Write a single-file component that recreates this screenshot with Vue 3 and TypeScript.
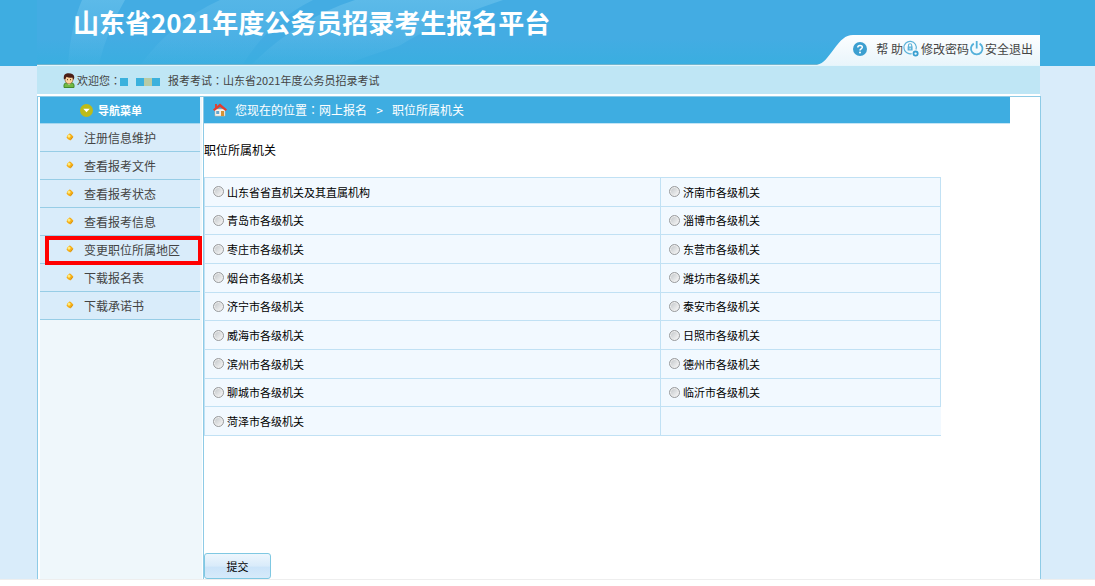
<script setup lang="ts">
import { ref } from 'vue'

interface MenuItem {
  label: string
  active?: boolean
}

const menu: MenuItem[] = [
  { label: '注册信息维护' },
  { label: '查看报考文件' },
  { label: '查看报考状态' },
  { label: '查看报考信息' },
  { label: '变更职位所属地区', active: true },
  { label: '下载报名表' },
  { label: '下载承诺书' },
]

const rows: string[][] = [
  ['山东省省直机关及其直属机构', '济南市各级机关'],
  ['青岛市各级机关', '淄博市各级机关'],
  ['枣庄市各级机关', '东营市各级机关'],
  ['烟台市各级机关', '潍坊市各级机关'],
  ['济宁市各级机关', '泰安市各级机关'],
  ['威海市各级机关', '日照市各级机关'],
  ['滨州市各级机关', '德州市各级机关'],
  ['聊城市各级机关', '临沂市各级机关'],
  ['菏泽市各级机关', ''],
]

const selected = ref<string>('')
</script>

<template>
  <div class="page">
    <header class="banner">
      <div class="banner-inner">
        <svg class="rays" viewBox="0 0 1003 64" preserveAspectRatio="xMinYMin slice" aria-hidden="true">
          <defs>
            <linearGradient id="ray" x1="0" y1="0" x2="0" y2="1">
              <stop offset="0" stop-color="#7fcdf0" stop-opacity=".42" />
              <stop offset="1" stop-color="#7fcdf0" stop-opacity=".04" />
            </linearGradient>
          </defs>
          <path d="M45 0H88Q70 30 62 64H31Q34 25 45 0Z" fill="url(#ray)" />
          <path d="M183 0H276Q232 22 206 64H104Q135 22 183 0Z" fill="url(#ray)" opacity=".7" />
          <path d="M318 0H466Q400 22 362 46Q325 58 310 64H215Q262 18 318 0Z" fill="url(#ray)" />
        </svg>
        <h1>山东省2021年度公务员招录考生报名平台</h1>
        <nav class="tools">
          <svg class="curve" viewBox="0 0 36 30" aria-hidden="true">
            <defs>
              <linearGradient id="tab" x1="0" y1="0" x2="0" y2="1">
                <stop offset="0" stop-color="#fdfeff" />
                <stop offset="1" stop-color="#e9f5fb" />
              </linearGradient>
            </defs>
            <path d="M0 30C7 28 10 23 17 14C24 5 28 0 36 0V30Z" fill="url(#tab)" />
          </svg>
          <div class="tools-body">
            <a href="#" class="help">
              <svg width="14" height="14" viewBox="0 0 14 14" aria-hidden="true">
                <circle cx="7" cy="7" r="7" fill="#3c9fd0" />
                <path d="M4.8 5.4C4.8 2.8 9.3 2.8 9.3 5.3C9.3 6.8 7 6.8 7 8.4" fill="none" stroke="#fff" stroke-width="1.5" />
                <circle cx="7" cy="10.4" r="1" fill="#fff" />
              </svg>
              <span>帮 助</span>
            </a>
            <a href="#" class="password">
              <svg width="16" height="17" viewBox="0 0 16 17" fill="none" stroke="#5db3d9" aria-hidden="true">
                <path d="M8.6 13.6A6.2 6.2 0 1 1 13 9.5" stroke-width="1.2" />
                <rect x="4.6" y="6.5" width="5" height="4" fill="#5db3d9" stroke="none" />
                <path d="M5.5 7V5.3a1.6 1.6 0 0 1 3.2 0V7" stroke-width="1.1" />
                <path d="M7.1 7.7V9.4" stroke="#fff" />
                <circle cx="12.6" cy="13.6" r="2.1" stroke="#399fd0" stroke-width="1.8" />
              </svg>
              <span>修改密码</span>
            </a>
            <a href="#" class="logout">
              <svg width="16" height="15" viewBox="0 0 16 15" fill="none" stroke="#53b0da" stroke-width="1.8" aria-hidden="true">
                <path d="M4.8 2.6a5.8 5.8 0 1 0 5.8 0M7.7 0V7.5" />
              </svg>
              <span>安全退出</span>
            </a>
          </div>
        </nav>
      </div>
    </header>

    <div class="welcome">
      <svg width="12" height="15" viewBox="0 0 12 15" aria-hidden="true">
        <path d="M1 14.5V12q0-2 3-2.3h4q3 .3 3 2.3v2.5Z" fill="#72b944" stroke="#438c2d" />
        <path d="M4 9.5L6 12L8 9.5Z" fill="#fff" />
        <ellipse cx="6" cy="6.5" rx="4" ry="4.3" fill="#ffd39b" stroke="#80502b" stroke-width=".6" />
        <path d="M1 6.5Q-.2 1 4.5.3Q11 0 11.3 4.2L10.7 7L9.5 4.5Q6 5.3 3.5 3.8Q3.3 6 1 6.5Z" fill="#4b1f17" />
        <path d="M4.5 6.2v1M7.5 6.2v1" stroke="#50301f" />
      </svg>
      <span>欢迎您<span class="colon">：</span></span>
      <span class="mask"><i></i><i></i><i></i><i></i></span>
      <span>报考考试<span class="colon">：</span>山东省2021年度公务员招录考试</span>
    </div>

    <div class="body">
      <aside>
        <h2>
          <svg width="13" height="13" viewBox="0 0 13 13" aria-hidden="true">
            <circle cx="6.5" cy="6.5" r="6.5" fill="#bdbb19" />
            <path d="M3.3 4.8H9.7L6.5 8.3Z" fill="#fff" />
          </svg>
          <span>导航菜单</span>
        </h2>
        <ul>
          <li v-for="item in menu" :key="item.label" :class="{ active: item.active }">
            <a href="#">
              <svg width="8" height="8" viewBox="0 0 8 8" aria-hidden="true">
                <path d="M3.8 .3L7.4 3.7L4.2 7.5L.4 4.2Z" fill="#f0a30c" />
                <circle cx="3.8" cy="4" r="2.7" fill="#f5ae16" />
                <circle cx="3" cy="3.1" r="1.6" fill="#ffea7c" />
                <path d="M4.2 7.5L7.4 3.7L5.6 5Z" fill="#b87912" />
              </svg>
              <span>{{ item.label }}</span>
            </a>
          </li>
        </ul>
      </aside>

      <main>
        <div class="crumb">
          <svg width="14" height="14" viewBox="0 0 14 14" aria-hidden="true">
            <path d="M2 6H12V13H2Z" fill="#f8f4ed" stroke="#c9b9a7" stroke-width=".6" />
            <path d="M2 1h2v4h-2Z" fill="#d8473a" />
            <path d="M7 .5L14 6.5L12.7 8L7 4L1.3 8L0 6.5Z" fill="#e33d2f" />
            <path d="M8 8h3v5H8Z" fill="#d79337" />
            <path d="M3.2 8h3v3h-3Z" fill="#65a5cd" />
          </svg>
          <span>您现在的位置<span class="colon">：</span>网上报名</span>
          <span class="sep">&gt;</span>
          <span>职位所属机关</span>
        </div>
        <form @submit.prevent>
          <h3>职位所属机关</h3>
          <table>
            <tbody>
              <tr v-for="(row, r) in rows" :key="r">
                <td v-for="(name, c) in row" :key="c" :class="{ blank: !name }">
                  <label v-if="name">
                    <input v-model="selected" type="radio" name="organ" :value="name" />
                    <span>{{ name }}</span>
                  </label>
                </td>
              </tr>
            </tbody>
          </table>
          <button type="submit">提交</button>
        </form>
      </main>
    </div>
  </div>
</template>

<style>
body {
  background: #fff;
}
</style>

<style scoped>
.page {
  font-family: "Noto Sans CJK SC", sans-serif;
  font-size: 12px;
  line-height: 16px;
  color: #444;
  background: linear-gradient(#3eade1 66px, #d9ecfa 66px);
  padding: 0 54px 0 37px;
  border-bottom: 1px solid #eee;
}
a {
  color: #444;
  text-decoration: none;
}
svg {
  flex: none;
}
h1, h2, h3, ul {
  margin: 0;
  padding: 0;
  font-size: 12px;
  list-style: none;
}
.colon {
  font-family: "Noto Sans CJK TC", sans-serif;
}
.banner {
  margin-right: 1px;
  border-bottom: 1px solid #e4f5fb;
}
.banner-inner {
  position: relative;
  display: flex;
  justify-content: space-between;
  height: 64px;
  background: linear-gradient(#43ace3 60%, #3aaee0);
  border-bottom: 1px solid #72b4cd;
}
.rays {
  position: absolute;
  inset: 0;
  width: 100%;
  height: 100%;
}
h1 {
  position: relative;
  padding: 4px 0 0 36px;
  font-size: 26px;
  line-height: 36px;
  color: #fff;
  white-space: nowrap;
}
.tools {
  position: relative;
  display: flex;
  align-self: flex-end;
  height: 30px;
  margin-bottom: -1px;
}
.curve {
  width: 36px;
  height: 30px;
}
.tools-body {
  display: flex;
  align-items: center;
  padding: 0 7px 3px 0;
  background: linear-gradient(#fdfeff, #e9f5fb);
}
.tools-body a {
  display: flex;
  align-items: center;
  white-space: nowrap;
}
.help {
  gap: 9px;
}
.password {
  gap: 2px;
}
.welcome {
  display: flex;
  align-items: center;
  height: 28px;
  margin-right: 1px;
  padding-left: 26px;
  border-bottom: 2px solid #fff;
  background: #bfe6f5;
  font-size: 11px;
  white-space: nowrap;
}
.welcome svg {
  margin-right: 2px;
}
.mask {
  display: flex;
  margin: 4px 8px 0 -1px;
}
.mask i {
  width: 8px;
  height: 8px;
  background: #3bb1dd;
}
.mask i:first-child {
  margin-right: 8px;
}
.mask i:nth-child(3) {
  background: #b8cba5;
}
.body {
  display: flex;
  min-height: 482px;
  border: 1px solid #8ecbe6;
  border-bottom: 0;
  background: #fff;
}
aside {
  flex: none;
  box-sizing: border-box;
  width: 164px;
  margin-left: 2px;
  background: linear-gradient(90deg, #eff7fb 162px, #fff 162px);
  border-right: 1px solid #8ecbe6;
}
h2 {
  display: flex;
  align-items: center;
  gap: 5px;
  height: 26px;
  padding-left: 40px;
  margin-right: 3px;
  border-bottom: 1px solid #a5d6ee;
  background: #3eade1;
  font-size: 11px;
  color: #fff;
}
ul {
  margin-right: 3px;
}
li {
  position: relative;
  border-bottom: 1px solid #97cde6;
  background: #d9ecfa;
}
li a {
  display: flex;
  align-items: center;
  gap: 10px;
  height: 27px;
  padding-left: 26px;
}
li svg {
  margin-bottom: 2px;
}
li.active::after {
  content: "";
  position: absolute;
  inset: 0 -2px -2px 5px;
  border: 4px solid #f00;
  z-index: 1;
}
main {
  flex: 1;
  min-width: 0;
  color: #000;
}
.crumb {
  display: flex;
  align-items: center;
  height: 26px;
  margin-right: 30px;
  padding-left: 9px;
  border-bottom: 1px solid #c5e5f5;
  background: #3eade1;
  color: #fff;
}
.crumb svg {
  margin-right: 8px;
}
.sep {
  width: 25px;
  text-align: center;
}
h3 {
  padding: 18px 0 19px;
  font-weight: 400;
}
table {
  width: calc(100% - 99px);
  height: 259px;
  table-layout: fixed;
  border-collapse: collapse;
  background: #f2f9ff;
  font-size: 11px;
}
td {
  padding: 0 0 0 8px;
  border: 1px solid #c1e1f4;
}
td:first-child {
  width: 447px;
}
td.blank {
  border-right-color: #f2f9ff;
}
label {
  display: flex;
  align-items: center;
  gap: 3px;
}
input {
  appearance: none;
  width: 11px;
  height: 11px;
  margin: 0;
  border: 1px solid #9a9c9e;
  border-radius: 50%;
  background: linear-gradient(135deg, #bfc3c6, #fafafa);
  box-shadow: inset 0 0 0 1px #eee;
}
input:checked {
  background: radial-gradient(#287eae 35%, #eee 40%);
}
button {
  display: block;
  width: 67px;
  height: 26px;
  margin-top: 117px;
  padding: 0;
  border: 1px solid #7fc8e2;
  border-radius: 3px;
  background: linear-gradient(#edf6fd, #d9ebfa 50%, #cbe4f9 55%, #d6eafa);
  font-family: inherit;
  font-size: 11px;
  color: #000;
}
</style>
